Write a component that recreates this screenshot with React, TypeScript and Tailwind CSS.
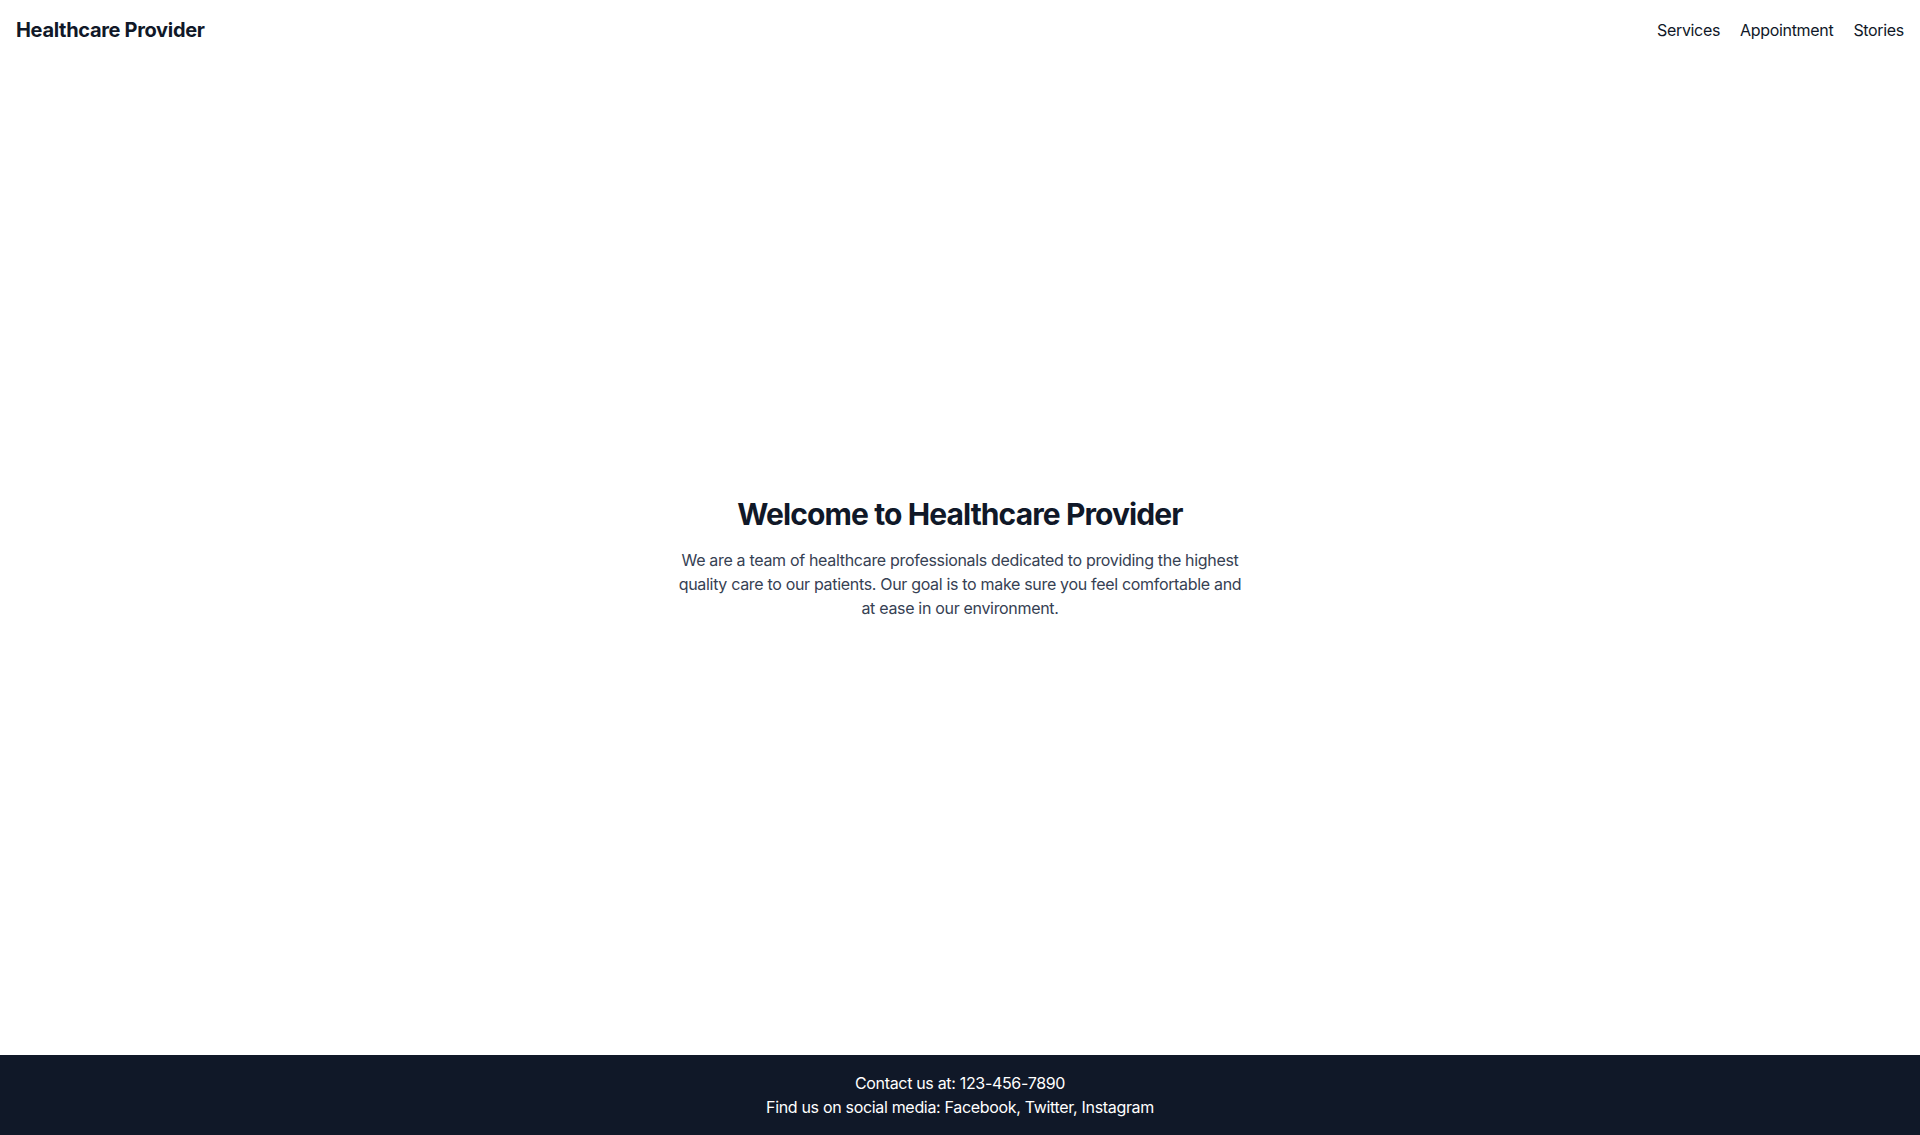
import React from "react";

export default function App() {
  return (
    <div
      className="min-h-screen flex flex-col bg-white text-gray-900 tracking-[-0.02em]"
      style={{ fontFamily: "Inter, 'Noto Sans', sans-serif" }}
    >
      <header className="flex items-center justify-between p-4">
        <h1 className="text-xl font-bold text-gray-900">Healthcare Provider</h1>
        <nav className="flex gap-5 text-base text-gray-900">
          <a href="#">Services</a>
          <a href="#">Appointment</a>
          <a href="#">Stories</a>
        </nav>
      </header>
      <main className="flex-1 flex flex-col items-center justify-center text-center px-4">
        <h2 className="text-3xl font-bold text-gray-900 mb-4 tracking-[-0.03em]">Welcome to Healthcare Provider</h2>
        <p className="max-w-xl text-base text-gray-700">
          We are a team of healthcare professionals dedicated to providing the highest quality care to our
          patients. Our goal is to make sure you feel comfortable and at ease in our environment.
        </p>
      </main>
      <footer className="bg-gray-900 text-white text-center p-4">
        <p>Contact us at: 123-456-7890</p>
        <p>Find us on social media: Facebook, Twitter, Instagram</p>
      </footer>
    </div>
  );
}
